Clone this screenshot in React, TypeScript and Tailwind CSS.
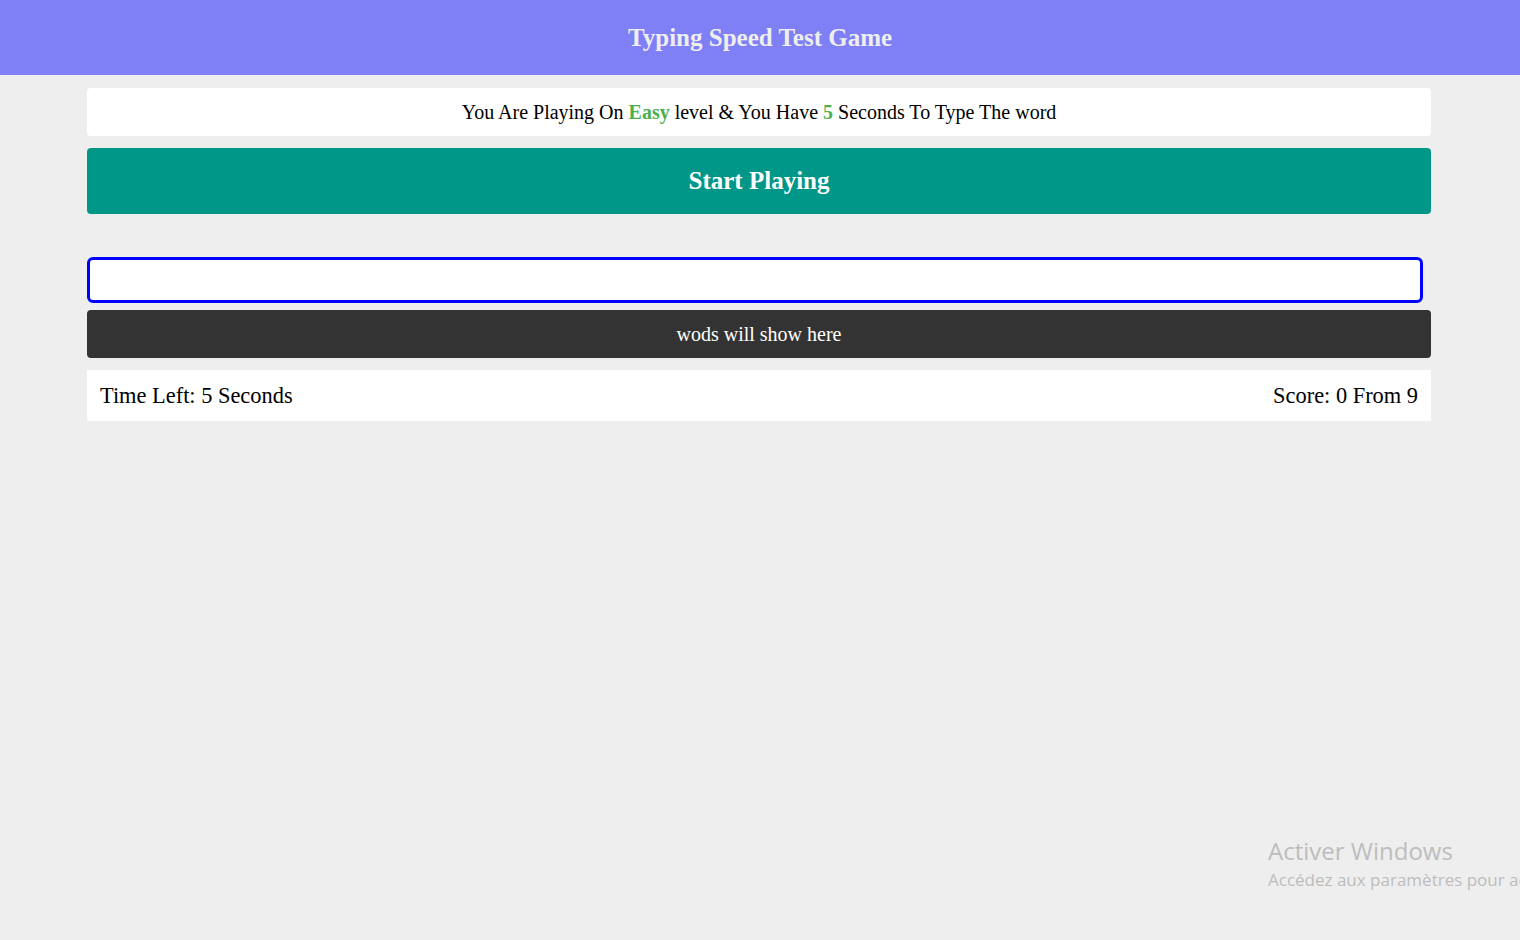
import React from "react";

const serif = { fontFamily: '"Liberation Serif", "Times New Roman", serif' };

export default function App() {
    return (
        <div className="relative min-h-[940px] w-full overflow-hidden bg-[#eeeeee]" style={serif}>
            <header className="flex h-[75px] items-center justify-center bg-[#7f7ff6]">
                <h1 className="text-[25px] font-bold text-[#eeeeee]">Typing Speed Test Game</h1>
            </header>

            <main className="ml-[87px] flex w-[1344px] flex-col pt-[13px]">
                <div className="flex h-[48px] items-center justify-center rounded bg-white text-[20px] text-black">
                    <span>
                        You Are Playing On <span className="font-bold text-[#4caf50]">Easy</span> level &amp; You Have{" "}
                        <span className="font-bold text-[#4caf50]">5</span> Seconds To Type The word
                    </span>
                </div>

                <button className="mt-3 flex h-[66px] items-center justify-center rounded bg-[#009688] text-[25px] font-bold text-white">
                    Start Playing
                </button>

                <input
                    className="mt-[43px] h-[46px] w-[1336px] rounded-md border-[3px] border-[#0000ff] bg-white outline-none"
                    type="text"
                />

                <div className="mt-[7px] flex h-[48px] items-center justify-center rounded bg-[#333333] text-[20px] text-white">
                    wods will show here
                </div>

                <div className="mt-3 flex h-[51px] items-center justify-between bg-white px-[13px] text-[22.4px] text-black">
                    <span>Time Left: 5 Seconds</span>
                    <span>Score: 0 From 9</span>
                </div>
            </main>

            <div
                className="absolute left-[1268px] top-[835px] whitespace-nowrap text-[#bdbdbd]"
                style={{ fontFamily: '"Open Sans", "Noto Sans", sans-serif' }}
            >
                <div className="text-[24px] leading-[32px]">Activer Windows</div>
                <div className="text-[17px] leading-[26px]">Accédez aux paramètres pour activer Windows.</div>
            </div>
        </div>
    );
}
